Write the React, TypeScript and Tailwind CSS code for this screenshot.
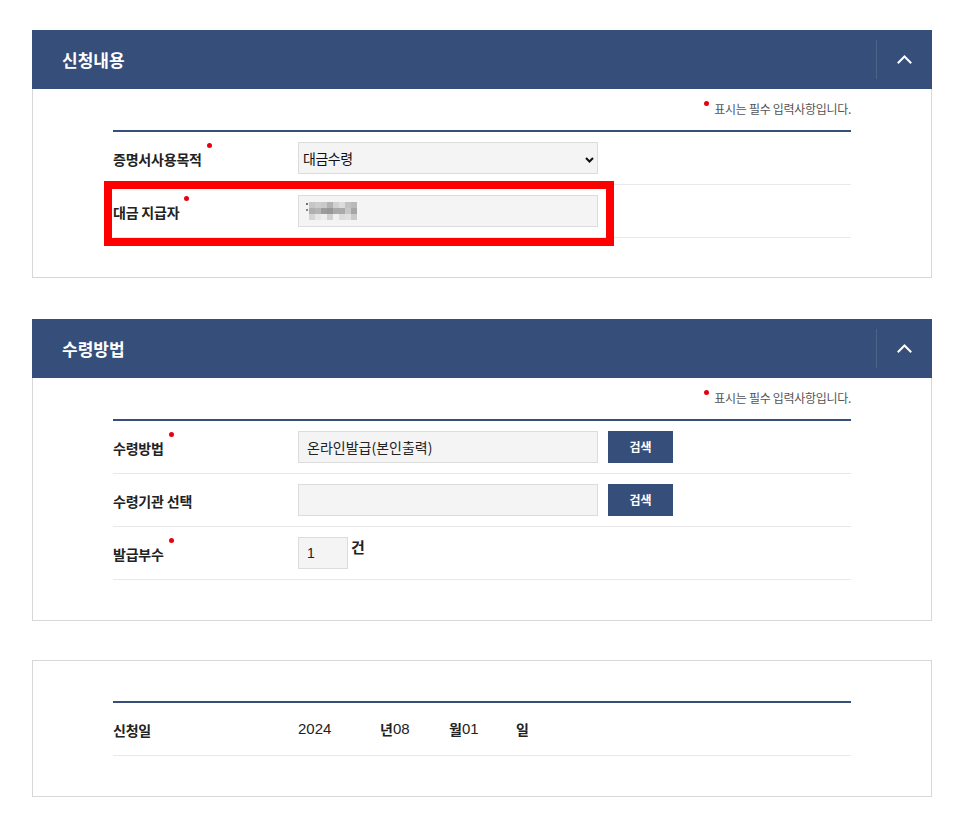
import React from "react";

const FONT = "font-['Noto_Sans_CJK_KR','Noto_Sans',sans-serif]";

function Dot() {
  return (
    <span className="absolute -right-[10px] top-[-6px] w-[5px] h-[5px] rounded-full bg-[#e60012]" />
  );
}

function Label({ text, required }: { text: string; required?: boolean }) {
  return (
    <div className="w-[185px] shrink-0">
      <span className="relative inline-block text-[14px] leading-[20px] font-bold tracking-[-0.2px] text-[#222]">
        {text}
        {required && <Dot />}
      </span>
    </div>
  );
}

function Header({ title }: { title: string }) {
  return (
    <div className="h-[59px] bg-[#354e7a] flex items-center">
      <div className="flex-1 pl-[30px] text-white text-[17px] font-bold leading-[24px]">
        {title}
      </div>
      <div className="w-[56px] h-[39px] border-l border-[#4d6389] flex items-center justify-center">
        <svg width="15" height="9" viewBox="0 0 15 9" fill="none">
          <polyline points="1.5,7.5 7.5,1.5 13.5,7.5" stroke="white" strokeWidth="2" strokeLinecap="square" />
        </svg>
      </div>
    </div>
  );
}

function Note() {
  return (
    <div className="pt-[11px] h-[29px] mb-[12px] flex justify-end items-start">
      <span className="relative text-[12px] leading-[18px] tracking-[-0.3px] text-[#555] pl-[10px]">
        <span className="absolute left-0 top-[1px] w-[5px] h-[5px] rounded-full bg-[#e60012]" />
        표시는 필수 입력사항입니다.
      </span>
    </div>
  );
}

function Row({ children, className = "" }: { children: React.ReactNode; className?: string }) {
  return (
    <div className={"relative h-[53px] border-b border-[#e8e8e8] flex items-center " + className}>
      {children}
    </div>
  );
}

const mosaic = [
  ["bg-[#c6c6c6]", "bg-[#cdcdcd]", "bg-[#c9c9c9]", "bg-[#b2b2b2]", "bg-[#d1d1d1]", "bg-[#dcdcdc]", "bg-[#c5c1c1]", "bg-[#b9b9b9]"],
  ["bg-[#afafaf]", "bg-[#b5b5b5]", "bg-[#9c9c9c]", "bg-[#979797]", "bg-[#a9a9a9]", "bg-[#aba9ad]", "bg-[#c7c7c7]", "bg-[#a6a6a6]"],
  ["bg-[#d5d5d5]", "bg-[#e6e6e6]", "bg-[#eeeeee]", "bg-[#d1d1d1]", "bg-[#f0f0f0]", "bg-[#dcdcdc]", "bg-[#e1e1e1]", "bg-[#c9c9c9]"],
];

function Mosaic() {
  return (
    <div className="flex items-start">
      <div className="flex flex-col mt-[1px] mr-[1px]">
        <span className="w-[2px] h-[2px] bg-[#8a6a50]" />
        <span className="w-[2px] h-[4px]" />
        <span className="w-[2px] h-[2px] bg-[#9a8070]" />
      </div>
      <div className="flex flex-col">
        {mosaic.map((row, i) => (
          <div key={i} className="flex">
            {row.map((c, j) => (
              <span key={j} className={"w-[6px] h-[6px] " + c} />
            ))}
          </div>
        ))}
      </div>
    </div>
  );
}

const inputBox = "h-[32px] bg-[#f4f4f4] border border-[#dcdcdc] flex items-center";

function SearchBtn() {
  return (
    <button className="ml-[10px] w-[65px] h-[32px] bg-[#354e7a] text-white text-[12px] font-bold flex items-center justify-center">
      검색
    </button>
  );
}

export default function App() {
  return (
    <div className={"min-h-screen bg-white pt-[30px] pl-[32px] " + FONT}>
      <div className="w-[900px] flex flex-col">
        {/* Section 1 */}
        <div>
          <Header title="신청내용" />
          <div className="border-x border-b border-[#d7d7d7] px-[80px] pb-[39px]">
            <Note />
            <div className="border-t-2 border-[#354e7a]">
              <Row>
                <Label text="증명서사용목적" required />
                <div className={"relative w-[300px] " + inputBox}>
                  <span className="pl-[4px] text-[14px] tracking-[-0.5px] text-[#111]">대금수령</span>
                  <svg className="absolute right-[3px] top-[14px]" width="9" height="6" viewBox="0 0 9 6" fill="none">
                    <polyline points="1,1 4.5,4.5 8,1" stroke="#111" strokeWidth="2" />
                  </svg>
                </div>
              </Row>
              <Row>
                <Label text="대금 지급자" required />
                <div className={"w-[300px] pl-[7px] " + inputBox}>
                  <Mosaic />
                </div>
                <div className="absolute left-[-9px] top-[-4px] w-[510px] h-[65px] border-[8px] border-[#ff0000] pointer-events-none" />
              </Row>
            </div>
          </div>
        </div>

        {/* Section 2 */}
        <div className="mt-[41px]">
          <Header title="수령방법" />
          <div className="border-x border-b border-[#d7d7d7] px-[80px] pb-[40px]">
            <Note />
            <div className="border-t-2 border-[#354e7a]">
              <Row>
                <Label text="수령방법" required />
                <div className={"w-[300px] pl-[8px] " + inputBox}>
                  <span className="text-[14px] text-[#222]">온라인발급(본인출력)</span>
                </div>
                <SearchBtn />
              </Row>
              <Row>
                <Label text="수령기관 선택" />
                <div className={"w-[300px] " + inputBox} />
                <SearchBtn />
              </Row>
              <Row>
                <Label text="발급부수" required />
                <div className="flex items-start">
                  <div className={"w-[50px] pl-[8px] " + inputBox}>
                    <span className="text-[14px] text-[#222] font-['Liberation_Sans',sans-serif]">1</span>
                  </div>
                  <span className="ml-[3px] text-[15px] leading-[20px] font-bold text-[#222]">건</span>
                </div>
              </Row>
            </div>
          </div>
        </div>

        {/* Section 3 */}
        <div className="mt-[39px] border border-[#d7d7d7] px-[80px] pt-[40px] pb-[40px]">
          <div className="border-t-2 border-[#354e7a]">
            <Row>
              <Label text="신청일" />
              <div className="flex items-center text-[#222]">
                <span className="w-[82px] text-[15px] font-['Liberation_Sans',sans-serif]">2024</span>
                <span className="w-[13px] text-[14px] font-bold">년</span>
                <span className="w-[56px] text-[15px] font-['Liberation_Sans',sans-serif]">08</span>
                <span className="w-[13px] text-[14px] font-bold">월</span>
                <span className="w-[54px] text-[15px] font-['Liberation_Sans',sans-serif]">01</span>
                <span className="text-[14px] font-bold">일</span>
              </div>
            </Row>
          </div>
        </div>
      </div>
    </div>
  );
}
